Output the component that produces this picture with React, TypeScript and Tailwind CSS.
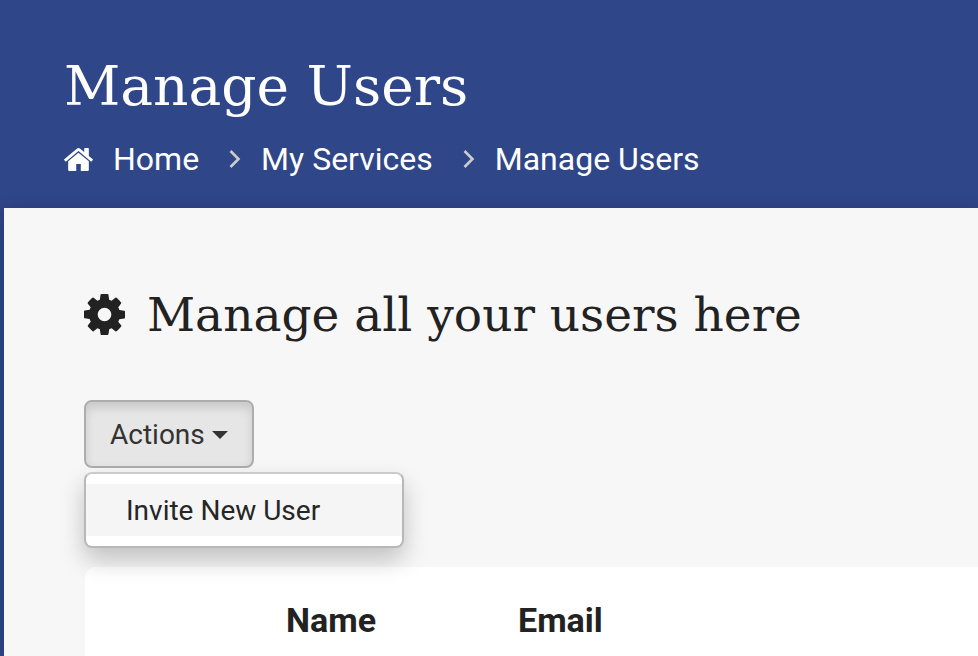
import React from "react";

function HomeIcon() {
  return (
    <svg viewBox="88 253 1616 1283" className="h-[23px] w-[29px] shrink-0 fill-current" aria-hidden="true">
      <path d="M1472 992v480q0 26-19 45t-45 19h-384v-384h-256v384h-384q-26 0-45-19t-19-45v-480q0-1 .5-3t.5-3l575-474 575 474q1 2 1 6zm223-69l-62 74q-8 9-21 11h-3q-13 0-21-7l-692-577-692 577q-12 8-24 7-13-2-21-11l-62-74q-8-10-7-23.5t11-21.5l719-599q32-26 76-26t76 26l244 204v-195q0-14 9-23t23-9h192q14 0 23 9t9 23v408l219 182q10 8 11 21.5t-7 23.5z" />
    </svg>
  );
}

function CogIcon() {
  return (
    <svg viewBox="128 128 1536 1536" className="mb-0.5 size-[41px] shrink-0 fill-current" aria-hidden="true">
      <path d="M1152 896q0-106-75-181t-181-75-181 75-75 181 75 181 181 75 181-75 75-181zm512-109v222q0 12-8 23t-20 13l-185 28q-19 54-39 91 35 50 107 138 10 12 10 25t-9 23q-27 37-99 108t-94 71q-12 0-26-9l-138-108q-44 23-91 38-16 136-29 186-7 28-36 28h-222q-14 0-24.5-8.5t-11.5-21.5l-28-184q-49-16-90-37l-141 107q-10 9-25 9-14 0-25-11-126-114-165-168-7-10-7-23 0-12 8-23 15-21 51-66.5t54-70.5q-27-50-41-99l-183-27q-13-2-21-12.5t-8-23.5v-222q0-12 8-23t19-13l186-28q14-46 39-92-40-57-107-138-10-12-10-24 0-10 9-23 26-36 98.5-107.5t94.5-71.5q13 0 26 10l138 107q44-23 91-38 16-136 29-186 7-28 36-28h222q14 0 24.5 8.5t11.5 21.5l28 184q49 16 90 37l142-107q9-9 24-9 13 0 25 10 129 119 165 170 7 8 7 22 0 12-8 23-15 21-51 66.5t-54 70.5q26 50 41 98l183 28q13 2 21 12.5t8 23.5z" />
    </svg>
  );
}

function Separator() {
  return (
    <svg viewBox="0 0 12 20" className="ml-[30px] mr-5 h-5 w-3 shrink-0 fill-none stroke-[#cccccc]" strokeWidth="2.6" aria-hidden="true">
      <path d="M1.500 2 9.500 10l-8 8" />
    </svg>
  );
}

export default function App() {
  return (
    <div className="flex min-h-screen flex-col overflow-x-hidden bg-[#2f4689] font-['Roboto',sans-serif] text-[#222222]">
      <header className="px-16 pt-[54px] pb-[29px] text-white">
        <h1 className="font-['Roboto_Slab','DejaVu_Serif',serif] text-[55px] leading-[64px]">Manage Users</h1>
        <nav aria-label="Breadcrumb" className="mt-[21px]">
          <ol className="flex items-center text-[32px] leading-10">
            <li>
              <a href="#home" className="flex items-center gap-5">
                <HomeIcon />
                Home
              </a>
            </li>
            <li className="flex items-center">
              <Separator />
              <a href="#services">My Services</a>
            </li>
            <li className="flex items-center">
              <Separator />
              <a href="#users" aria-current="page">Manage Users</a>
            </li>
          </ol>
        </nav>
      </header>

      <main className="ml-1 flex grow flex-col bg-[#f7f7f7] pt-[75px] pl-20 shadow-[0_2px_16px_rgba(0,0,0,0.2)]">
        <h2 className="flex items-center gap-[22px] font-['Roboto_Slab','DejaVu_Serif',serif] text-[47px] leading-[64px]">
          <CogIcon />
          Manage all your users here
        </h2>

        <div className="relative mt-[53px] self-start">
          <button
            type="button"
            aria-expanded="true"
            aria-haspopup="menu"
            className="flex h-[68px] items-center gap-[7px] rounded-lg border-2 border-[#adadad] bg-[#e6e6e6] px-6 pt-0.5 text-[28px] leading-10 text-[#333333] shadow-[inset_0_6px_10px_rgba(0,0,0,0.125)]"
          >
            Actions
            <span className="border-x-8 border-t-8 border-x-transparent border-t-[#333333]" />
          </button>
          <ul
            role="menu"
            className="absolute top-full left-0 z-10 mt-1 w-80 rounded-lg border-2 border-[#b8b8b8] border-t-[#cccccc] bg-white py-2.5 shadow-[0_12px_24px_rgba(0,0,0,0.22)]"
          >
            <li role="none">
              <a role="menuitem" href="#invite" className="block bg-[#f5f5f5] px-10 pt-[7px] pb-[5px] text-[28px] leading-10 text-[#262626]">
                Invite New User
              </a>
            </li>
          </ul>
        </div>

        <div className="mt-[99px] ml-px grow rounded-tl-[10px] bg-white">
          <table className="w-full table-fixed text-left">
            <thead>
              <tr className="text-[34px] leading-10">
                <td className="w-[201px]" />
                <th scope="col" className="w-[232px] pt-[33px] font-bold">Name</th>
                <th scope="col" className="pt-[33px] font-bold">Email</th>
              </tr>
            </thead>
          </table>
        </div>
      </main>
    </div>
  );
}
